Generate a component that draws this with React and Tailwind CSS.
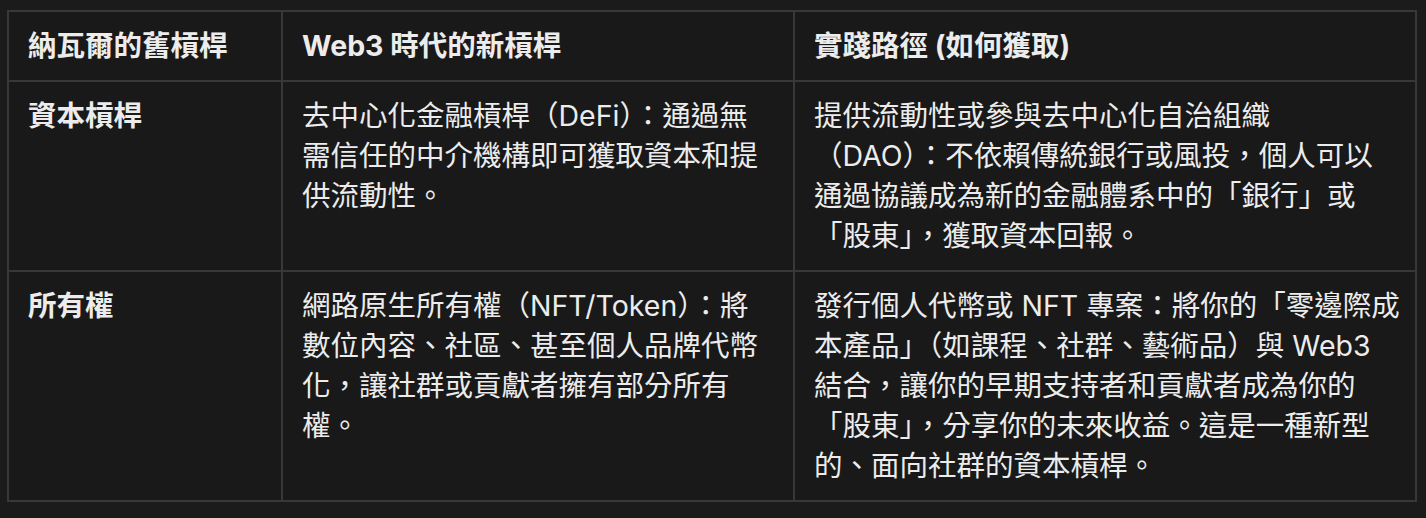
import React from 'react'

// lines are split as in the reference so that the wrap matches
const rows = [
  {
    old: '資本槓桿',
    next: ['去中心化金融槓桿（DeFi）：通過無', '需信任的中介機構即可獲取資本和提', '供流動性。'],
    path: [
      '提供流動性或參與去中心化自治組織',
      '（DAO）：不依賴傳統銀行或風投，個人可以',
      '通過協議成為新的金融體系中的「銀行」或',
      '「股東」，獲取資本回報。',
    ],
  },
  {
    old: '所有權',
    next: ['網路原生所有權（NFT/Token）：將', '數位內容、社區、甚至個人品牌代幣', '化，讓社群或貢獻者擁有部分所有', '權。'],
    path: [
      '發行個人代幣或 NFT 專案：將你的「零邊際成',
      '本產品」（如課程、社群、藝術品）與 Web3',
      '結合，讓你的早期支持者和貢獻者成為你的',
      '「股東」，分享你的未來收益。這是一種新型',
      '的、面向社群的資本槓桿。',
    ],
  },
]

const cell = 'border-2 border-[#383838] px-[19px] py-[14px] align-top'

const Lines = ({ lines }) => (
  <>
    {lines.map((l) => (
      <div key={l} className="whitespace-nowrap">
        {l}
      </div>
    ))}
  </>
)

export default function App() {
  return (
    <div
      className="min-h-[518px] w-full bg-[#1b1b1b] pl-[7px] pr-[11px] pt-[10px] text-[#ececec]"
      style={{ fontFamily: 'Inter, "Noto Sans CJK TC", sans-serif' }}
    >
      <table className="w-[1408px] table-fixed border-collapse bg-[#191919] text-[28.5px] leading-[40px]">
        <colgroup>
          <col className="w-[274px]" />
          <col className="w-[512px]" />
          <col className="w-[622px]" />
        </colgroup>
        <thead>
          <tr className="text-left font-bold">
            <th className={cell}>納瓦爾的舊槓桿</th>
            <th className={cell}>Web3 時代的新槓桿</th>
            <th className={cell}>實踐路徑 (如何獲取)</th>
          </tr>
        </thead>
        <tbody>
          {rows.map((r) => (
            <tr key={r.old}>
              <td className={`${cell} font-bold`}>{r.old}</td>
              <td className={cell}>
                <Lines lines={r.next} />
              </td>
              <td className={cell}>
                <Lines lines={r.path} />
              </td>
            </tr>
          ))}
        </tbody>
      </table>
    </div>
  )
}
